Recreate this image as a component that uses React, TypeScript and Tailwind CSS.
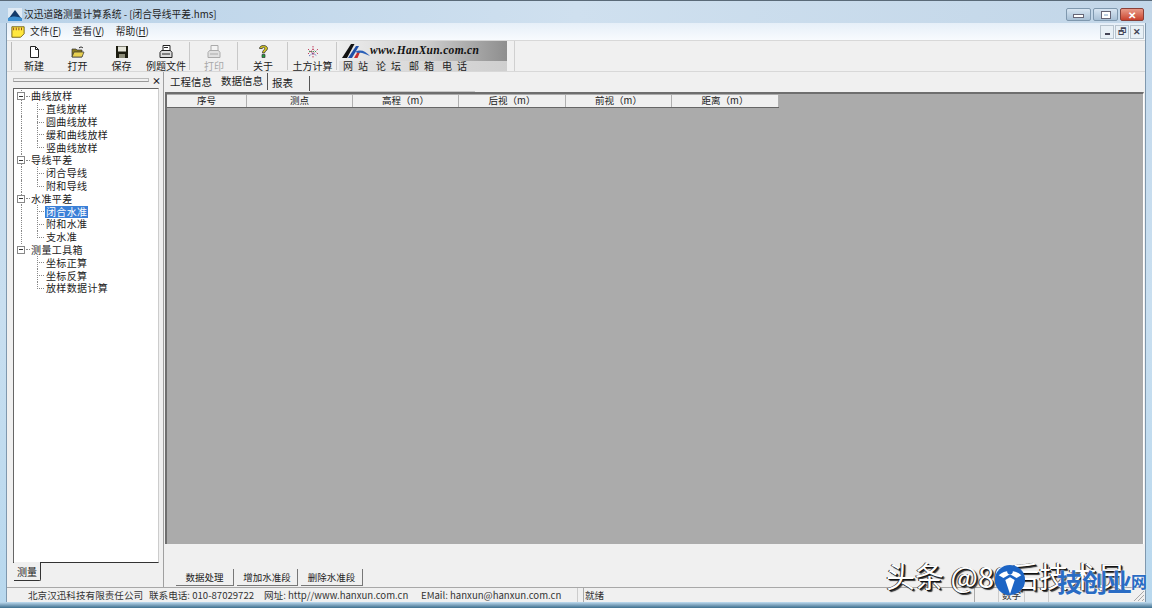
import React from "react";

const cjk = "font-['Noto_Sans_CJK_SC','Liberation_Sans',sans-serif]";

const tree = [
    { label: "曲线放样", children: ["直线放样", "圆曲线放样", "缓和曲线放样", "竖曲线放样"] },
    { label: "导线平差", children: ["闭合导线", "附和导线"] },
    { label: "水准平差", children: ["闭合水准", "附和水准", "支水准"] },
    { label: "测量工具箱", children: ["坐标正算", "坐标反算", "放样数据计算"] },
];

const columns = [
    { label: "序号", w: "w-[80px]" },
    { label: "测点", w: "w-[106px]" },
    { label: "高程（m）", w: "w-[106px]" },
    { label: "后视（m）", w: "w-[107px]" },
    { label: "前视（m）", w: "w-[106px]" },
    { label: "距离（m）", w: "w-[107px]" },
];

function NewIcon() {
    return (
        <svg width="11" height="12" viewBox="0 0 11 12">
            <path d="M1.500 .5h5l3 3v8h-8z" fill="#fff" stroke="#222" />
            <path d="M6.500 .5v3h3" fill="none" stroke="#222" />
        </svg>
    );
}

function OpenIcon() {
    return (
        <svg width="14" height="12" viewBox="0 0 14 12">
            <path d="M1 3h4l1 1h5v7H1z" fill="#8a7a20" stroke="#333" strokeWidth=".7" />
            <path d="M1 11l2-5h10l-2 5z" fill="#e8d050" stroke="#333" strokeWidth=".7" />
            <path d="M8 2c1.500-1.500 3-1 4 0" fill="none" stroke="#222" />
        </svg>
    );
}

function SaveIcon() {
    return (
        <svg width="12" height="12" viewBox="0 0 12 12">
            <path d="M0 0h12v12H0z" fill="#1c1c10" />
            <path d="M2 .5h8v5H2z" fill="#e4e4d8" />
            <path d="M3 8h6v4H3z" fill="#8c8c78" />
        </svg>
    );
}

function ExampleIcon() {
    return (
        <svg width="14" height="13" viewBox="0 0 14 13">
            <path d="M4 .5h7v5H4z" fill="#fff" stroke="#222" />
            <path d="M2.500 5.500h9l1.500 2v5H1v-5z" fill="#ddd" stroke="#222" />
            <path d="M3 9h8M5 2.500h4" stroke="#222" />
        </svg>
    );
}

function PrintIcon() {
    return (
        <svg width="14" height="13" viewBox="0 0 14 13">
            <path d="M4 .5h7v5H4z" fill="#f4f4f4" stroke="#aaa" />
            <path d="M2.500 5.500h9l1.500 2v5H1v-5z" fill="#e0e0e0" stroke="#aaa" />
            <path d="M3 9h8" stroke="#aaa" />
        </svg>
    );
}

function HelpIcon() {
    return (
        <svg width="9" height="13" viewBox="0 0 9 13">
            <path d="M.5 3.500C.5 1.500 2.500.5 4.500.5s4 1 4 3c0 2.200-3 2.500-3 4.500h-2c0-3 2.200-3 2.200-4.500 0-.8-.5-1.200-1.200-1.200s-1.200.5-1.200 1.200z" fill="#d8c820" stroke="#333" strokeWidth=".8" />
            <path d="M3 9.500h3v3H3z" fill="#20a040" stroke="#333" strokeWidth=".7" />
        </svg>
    );
}

function EarthIcon() {
    return (
        <svg width="14" height="14" viewBox="0 0 14 14">
            <path d="M2 4l5 5 5-5M2 9l5-5 5 5M7 1v12" fill="none" stroke="#c04060" strokeWidth="1" strokeDasharray="1.500 1" />
            <path d="M3 11l4-3 4 3" fill="none" stroke="#4050b0" strokeWidth="1" strokeDasharray="1 1" />
            <path d="M3 6.500h8" stroke="#40a060" strokeWidth="1" strokeDasharray="1 1" />
        </svg>
    );
}

function LogoMark() {
    return (
        <svg width="28" height="16" viewBox="0 0 28 16">
            <path d="M0 15L9 1h3.500L5 15z" fill="#111" />
            <path d="M6 15L14 3h3L10 15z" fill="#1f4fa8" />
            <path d="M12 15l4-7h2.500l-3 7z" fill="#c83030" />
            <path d="M13 9c6-3 10-1 15 4-5-2-9-4-11-3z" fill="#2a5fb8" />
        </svg>
    );
}

function AppIcon() {
    return (
        <svg width="14" height="13" viewBox="0 0 14 13">
            <path d="M0 0h14v13H0z" fill="#dfeaf4" />
            <path d="M1 10L7 2l3 4 3 4z" fill="#123a6a" />
            <path d="M0 10c4-2 9-2 14 0v3H0z" fill="#3b8ed0" />
        </svg>
    );
}

function ToolButton({ w, label, disabled, children }: { w: string; label: string; disabled?: boolean; children: React.ReactNode }) {
    return (
        <div className={`${w} flex flex-col items-center justify-start pt-[3px]`}>
            <div className="h-[15px] flex items-center justify-center">{children}</div>
            <span className={`text-[10px] leading-[13px] whitespace-nowrap ${disabled ? "text-[#a8a8a8]" : "text-[#222]"}`}>{label}</span>
        </div>
    );
}

function Sep() {
    return <div className="w-[2px] h-[28px] mt-[1px] border-l border-[#c8c8c8] border-r-white" />;
}

function TreeRow({ label, root, selected, line, childLine }: { label: string; root?: boolean; selected?: boolean; line?: boolean; childLine?: "mid" | "last" }) {
    return (
        <div className="flex h-[12.8px] items-center relative">
            {line && <div className="absolute left-[6px] top-0 bottom-0 border-l border-dotted border-[#888]" />}
            {root ? (
                <>
                    <div className="relative z-10 w-[8px] h-[8px] ml-[2px] border border-[#888] bg-white flex items-center justify-center">
                        <div className="w-[4px] h-[1px] bg-[#333]" />
                    </div>
                    <div className="w-[4px] border-t border-dotted border-[#888] ml-[1px]" />
                    <span className="ml-[1px] text-[10px] leading-[12px] text-[#222] tracking-[0.4px] whitespace-nowrap">{label}</span>
                </>
            ) : (
                <>
                    <div className={`absolute left-[22px] top-0 border-l border-dotted border-[#888] ${childLine === "last" ? "h-[7px]" : "h-full"}`} />
                    <div className="absolute left-[22px] top-[6px] w-[7px] border-t border-dotted border-[#888]" />
                    <span className={`ml-[30px] px-[1px] text-[10px] leading-[12px] tracking-[0.35px] whitespace-nowrap ${selected ? "bg-[#3a80d8] text-white" : "text-[#222]"}`}>{label}</span>
                </>
            )}
        </div>
    );
}

function BottomTab({ w, label }: { w: string; label: string }) {
    return (
        <div className={`${w} h-[17px] flex items-center justify-center bg-[#f0f0f0] border-r border-b border-[#777] text-[9.500px] text-[#222]`}>{label}</div>
    );
}

export default function App() {
    return (
        <div className={`relative w-[1152px] h-[608px] overflow-hidden flex flex-col bg-gradient-to-b from-[#c4d9ec] via-[#c9dff0] to-[#b8d8ee] ${cjk}`}>
            {/* title bar */}
            <div className="h-[23px] shrink-0 flex items-center pl-[8px] pr-[8px] pt-[5px] border-t border-[#5a6a78] bg-gradient-to-r from-[#b9d2e8] via-[#cfe0ef] to-[#c2d6e8]">
                <AppIcon />
                <span className="ml-[2px] text-[9.750px] text-[#222] whitespace-nowrap">汉迅道路测量计算系统 - [闭合导线平差.hms]</span>
                <div className="ml-auto flex gap-[2px] items-start">
                    <div className="w-[25px] h-[13px] rounded-[2px] border border-[#7f98ae] bg-gradient-to-b from-[#d8e6f2] to-[#a8c0d6] flex items-end justify-center pb-[2px]">
                        <div className="w-[9px] h-[2px] bg-white border border-[#667] box-content" />
                    </div>
                    <div className="w-[25px] h-[13px] rounded-[2px] border border-[#7f98ae] bg-gradient-to-b from-[#d8e6f2] to-[#a8c0d6] flex items-center justify-center">
                        <div className="w-[8px] h-[6px] border-2 border-white outline outline-[#667]" />
                    </div>
                    <div className="w-[24px] h-[13px] rounded-[2px] border border-[#8a4038] bg-gradient-to-b from-[#e89a88] to-[#c8402c] flex items-center justify-center text-white text-[10px] font-bold leading-none">✕</div>
                </div>
            </div>
            <div className="mx-[6px] flex-1 min-h-0 flex flex-col bg-[#f0f0f0] border-x border-[#7f98ae]">
                {/* menu */}
                <div className="h-[17px] shrink-0 flex items-center bg-gradient-to-b from-[#e6eff8] to-[#f8fbfe] pr-[1px]">
                    <svg width="14" height="14" viewBox="0 0 16 14" className="ml-[4px]">
                        <path d="M1 1h14v8l-4 4H1z" fill="#ffe840" stroke="#6b5a10" />
                        <path d="M3 2v3M6 2v3M9 2v3M12 2v3" stroke="#8a3020" />
                    </svg>
                    <div className="ml-[5px] flex gap-[11.500px] text-[9.700px] text-[#222] whitespace-nowrap">
                        <span>文件(<u>F</u>)</span>
                        <span>查看(<u>V</u>)</span>
                        <span>帮助(<u>H</u>)</span>
                    </div>
                    <div className="ml-auto flex gap-[1px] mr-[0px]">
                        <div className="w-[14px] h-[14px] border border-[#b8c4ce] bg-[#e8f0f6] flex items-end justify-center pb-[3px]"><div className="w-[5px] h-[2px] bg-[#445]" /></div>
                        <div className="w-[14px] h-[14px] border border-[#b8c4ce] bg-[#e8f0f6] flex items-center justify-center text-[9px] leading-none text-[#445]">🗗</div>
                        <div className="w-[14px] h-[14px] border border-[#b8c4ce] bg-[#e8f0f6] flex items-center justify-center text-[9px] font-bold leading-none text-[#445]">✕</div>
                    </div>
                </div>
                {/* toolbar */}
                <div className="h-[32px] shrink-0 flex items-start border-y border-[#d8d8d8] pl-[4px]">
                    <div className="w-[2px] h-[28px] mt-[1px] border-l border-[#bbb]" />
                    <ToolButton w="w-[42px]" label="新建"><NewIcon /></ToolButton>
                    <ToolButton w="w-[45px]" label="打开"><OpenIcon /></ToolButton>
                    <ToolButton w="w-[43px]" label="保存"><SaveIcon /></ToolButton>
                    <ToolButton w="w-[46px]" label="例题文件"><ExampleIcon /></ToolButton>
                    <Sep />
                    <ToolButton w="w-[46px]" label="打印" disabled><PrintIcon /></ToolButton>
                    <Sep />
                    <ToolButton w="w-[48px]" label="关于"><HelpIcon /></ToolButton>
                    <Sep />
                    <ToolButton w="w-[47px]" label="土方计算"><EarthIcon /></ToolButton>
                    <Sep />
                    <div className="w-[168px] h-[30px] ml-[1px] flex flex-col bg-[#d4d4d4]">
                        <div className="h-[20px] flex items-center pl-[3px] bg-gradient-to-r from-[#eeeeee] via-[#d0d0d0] to-[#8e8e8e]">
                            <LogoMark />
                            <span className="font-['Liberation_Serif',serif] italic font-bold text-[11.500px] leading-none text-[#111] tracking-[0.3px] whitespace-nowrap">www.HanXun.com.cn</span>
                        </div>
                        <div className="h-[10px] flex items-center pl-[4px] text-[10px] leading-none text-[#222] whitespace-nowrap bg-gradient-to-r from-[#e4e4e4] to-[#cfcfcf] gap-[5px]">
                            <span>网</span><span className="mr-[3px]">站</span>
                            <span>论</span><span className="mr-[3px]">坛</span>
                            <span>邮</span><span className="mr-[3px]">箱</span>
                            <span>电</span><span>话</span>
                        </div>
                    </div>
                    <div className="w-[2px] h-[30px] ml-[7px] border-l border-[#d0d0d0]" />
                </div>
                {/* body */}
                <div className="flex-1 min-h-0 flex">
                    {/* left dock */}
                    <div className="w-[157px] shrink-0 flex flex-col border-r border-[#a0a0a0] pl-[6px] pr-[4px]">
                        <div className="h-[16px] shrink-0 flex items-center">
                            <div className="flex-1 h-[4px] border border-[#bbb] border-b-[#999]" />
                            <span className="ml-[3px] mr-[-2px] text-[9px] font-bold leading-none text-[#222]">×</span>
                        </div>
                        <div className="h-[475px] shrink-0 bg-white border border-[#666] border-b-[#333] border-r-[#ccc] pt-[1px] pl-[1px]">
                            {tree.map((group, gi) => (
                                <div key={group.label}>
                                    <TreeRow label={group.label} root line={gi < tree.length - 1} />
                                    {group.children.map((c, ci) => (
                                        <TreeRow
                                            key={c}
                                            label={c}
                                            selected={c === "闭合水准"}
                                            line={gi < tree.length - 1}
                                            childLine={ci === group.children.length - 1 ? "last" : "mid"}
                                        />
                                    ))}
                                </div>
                            ))}
                        </div>
                        <div className="ml-[1px] w-[27px] h-[19px] -mt-[1px] bg-[#f0f0f0] border-r border-b border-[#333] rounded-br-[2px] flex items-center justify-center text-[10px] text-[#222] relative z-10">测量</div>
                    </div>
                    {/* main */}
                    <div className="flex-1 min-w-0 flex flex-col pl-[1px] pr-[1px]">
                        <div className="h-[20px] shrink-0 flex items-end text-[10.500px] text-[#222] pl-[5px] relative">
                            <div className="w-[51px] h-[15px] mb-[3px] leading-[15px] whitespace-nowrap">工程信息</div>
                            <div className="w-[47px] h-[17px] leading-[15px] -mt-[2px] mb-[2px] border-r border-[#555] whitespace-nowrap">数据信息</div>
                            <div className="w-[42px] h-[15px] leading-[14px] pl-[4px] border-r border-[#555] mb-[1px]">报表</div>
                            <div className="absolute left-[145px] bottom-[0px] w-[165px] border-t border-[#c8c8c8]" />
                        </div>
                        <div className="h-[452px] shrink-0 bg-[#ababab] border-t-2 border-l-2 border-[#6e6e6e] border-r border-r-white pt-[1px]">
                            <div className="flex h-[13px] w-[612px] bg-[#f0f0f0] border-r border-b border-[#666]">
                                {columns.map(col => (
                                    <div key={col.label} className={`${col.w} shrink-0 border-r border-[#b0b0b0] text-center text-[9.500px] leading-[10px] text-[#222] whitespace-nowrap`}>{col.label}</div>
                                ))}
                            </div>
                        </div>
                        <div className="flex-1 flex items-end pl-[11px] pb-[1px] gap-[3px]">
                            <BottomTab w="w-[58px]" label="数据处理" />
                            <BottomTab w="w-[61px]" label="增加水准段" />
                            <BottomTab w="w-[62px]" label="删除水准段" />
                        </div>
                    </div>
                </div>
                {/* status bar */}
                <div className="h-[15px] shrink-0 flex border-t border-[#a8a8a8] text-[9.600px] leading-[14px] text-[#333] whitespace-nowrap bg-[#f0f0f0]">
                    <div className="w-[571px] flex border-r border-[#ccc] pl-[21px]">
                        <span className="w-[121px]">北京汉迅科技有限责任公司</span>
                        <span className="w-[115px]">联系电话:&nbsp;010-87029722</span>
                        <span className="w-[157px]">网址: http//www.hanxun.com.cn</span>
                        <span>EMail: hanxun@hanxun.com.cn</span>
                    </div>
                    <div className="w-[5px]" />
                    <div className="w-[392px] border-l border-r border-[#aaa] pl-[1px]">就绪</div>
                    <div className="w-[24px] border-r border-[#ccc]" />
                    <div className="w-[26px] border-r border-[#ccc] text-center">数字</div>
                    <div className="w-[24px] border-r border-[#ccc]" />
                    <div className="flex-1 relative">
                        <svg width="14" height="14" viewBox="0 0 14 14" className="absolute right-0 bottom-0">
                            <path d="M13 3L3 13M13 7l-6 6M13 11l-2 2" stroke="#a8a8a8" />
                        </svg>
                    </div>
                </div>
            </div>
            <div className="h-[6px] shrink-0 bg-gradient-to-b from-[#c0dcf0] to-[#3d6f8e]" />

            {/* watermark */}
            <div className="absolute left-[886px] top-[557px] text-[29px] leading-[36px] text-white whitespace-nowrap [text-shadow:1px_1px_0_#111,2px_2px_1px_#333,-1px_0_0_#333]">
                头条 @80后技术员
            </div>
            <svg width="32" height="34" viewBox="0 0 34 34" className="absolute left-[994px] top-[563px]">
                <circle cx="17" cy="17" r="16" fill="#1c64c4" />
                <path d="M5 12c6-6 18-6 24 0l-5 3-7-4-7 4zM12 17l5-3 5 3-5 15z" fill="#fff" />
                <circle cx="17" cy="8" r="3" fill="#1c64c4" />
            </svg>
            <div className="absolute left-[1057px] top-[566px] flex items-center h-[30px] text-[25px] leading-[30px] font-bold text-[#2a6cc4] whitespace-nowrap [text-shadow:0_0_2px_#fff]">
                <span>技创业</span><span className="text-[16px] -ml-[1px]">网</span>
            </div>
        </div>
    );
}
